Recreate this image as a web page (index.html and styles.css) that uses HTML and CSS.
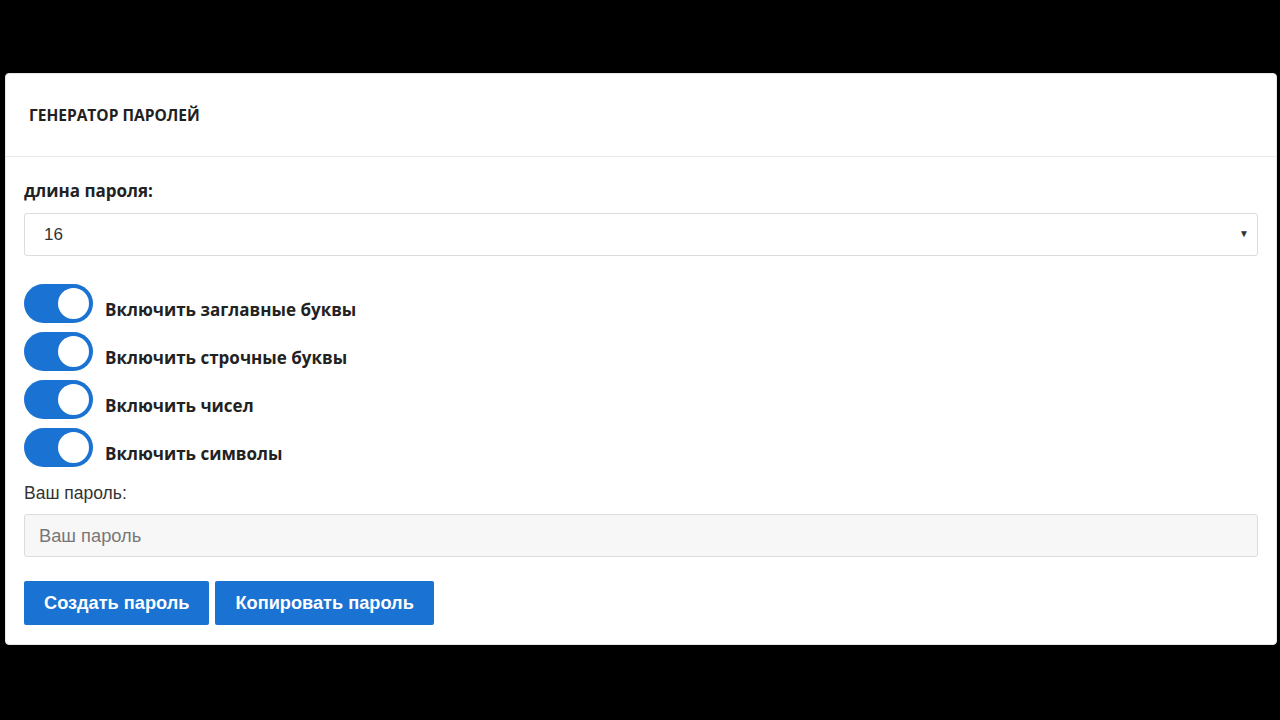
FILE: index.html
```html
<!DOCTYPE html>
<html lang="ru">
<head>
    <meta charset="UTF-8">
    <meta name="viewport" content="width=device-width, initial-scale=1.0">
    <title>Генератор паролей</title>
    <link rel="stylesheet" href="styles.css">
</head>
<body>
    <div class="card">
        <div class="cardHeader">ГЕНЕРАТОР ПАРОЛЕЙ</div>
        <div class="cardBody">
            <label class="boldLabel" for="length">длина пароля:</label>
            <div class="selectBox">
                <select id="length">
                    <option>16</option>
                </select>
                <span class="arrow">&#9660;</span>
            </div>

            <div class="toggles">
                <label class="toggleRow">
                    <span class="toggle"><span class="knob"></span></span>
                    <span class="toggleText">Включить заглавные буквы</span>
                </label>
                <label class="toggleRow">
                    <span class="toggle"><span class="knob"></span></span>
                    <span class="toggleText">Включить строчные буквы</span>
                </label>
                <label class="toggleRow">
                    <span class="toggle"><span class="knob"></span></span>
                    <span class="toggleText">Включить чисел</span>
                </label>
                <label class="toggleRow">
                    <span class="toggle"><span class="knob"></span></span>
                    <span class="toggleText">Включить символы</span>
                </label>
            </div>

            <label class="plainLabel" for="result">Ваш пароль:</label>
            <input type="text" id="result" placeholder="Ваш пароль" readonly>

            <div class="buttons">
                <button class="btn">Создать пароль</button>
                <button class="btn">Копировать пароль</button>
            </div>
        </div>
    </div>
</body>
</html>
```

FILE: styles.css
```css
body{
    margin: 0;
    background-color: #000;
    padding: 73px 3px 0 5px;
    height: 720px;
    box-sizing: border-box;
    font-family: "Liberation Sans", Arial, sans-serif;
    color: #333;
}

.card{
    background-color: #fff;
    border-radius: 4px;
    height: 572px;
    box-sizing: border-box;
    border: 1px solid #e6e6e6;
}

.cardHeader{
    height: 83px;
    box-sizing: border-box;
    border-bottom: 1px solid #e9e9e9;
    padding: 0 0 1px 23px;
    display: flex;
    align-items: center;
    font-family: "Open Sans", sans-serif;
    font-weight: 700;
    font-size: 15.5px;
    color: #212121;
}

.cardBody{
    padding: 22px 18px 0 18px;
}

.boldLabel{
    display: block;
    font-family: "Open Sans", sans-serif;
    font-weight: 700;
    font-size: 17px;
    line-height: 24px;
    color: #222;
    margin-bottom: 10px;
}

.selectBox{
    position: relative;
    height: 43px;
}

.selectBox select{
    appearance: none;
    -webkit-appearance: none;
    width: 100%;
    height: 43px;
    border: 1px solid #dcdcdc;
    border-radius: 3px;
    background-color: #fff;
    padding: 0 19px;
    font-family: "Liberation Sans", Arial, sans-serif;
    font-size: 17px;
    color: #333;
}

.arrow{
    position: absolute;
    right: 9px;
    top: 15px;
    font-size: 10px;
    color: #333;
}

.toggles{
    margin-top: 28px;
    display: flex;
    flex-direction: column;
    gap: 9px;
}

.toggleRow{
    display: flex;
    align-items: center;
    gap: 12px;
    height: 39px;
}

.toggle{
    width: 69px;
    height: 39px;
    border-radius: 20px;
    background-color: #1a73d3;
    display: flex;
    align-items: center;
    justify-content: flex-end;
    padding-right: 4px;
    box-sizing: border-box;
}

.knob{
    width: 31px;
    height: 31px;
    border-radius: 50%;
    background-color: #fff;
}

.toggleText{
    font-family: "Open Sans", sans-serif;
    font-weight: 700;
    font-size: 17px;
    color: #222;
    padding-top: 11px;
}

.plainLabel{
    display: block;
    margin-top: 14px;
    font-size: 17.5px;
    line-height: 24px;
    color: #333;
}

#result{
    display: block;
    margin-top: 9px;
    width: 100%;
    height: 43px;
    box-sizing: border-box;
    border: 1px solid #dcdcdc;
    border-radius: 3px;
    background-color: #f7f7f7;
    padding: 0 14px;
    font-family: "Liberation Sans", Arial, sans-serif;
    font-size: 18.3px;
}

#result::placeholder{
    color: #777;
}

.buttons{
    margin-top: 24px;
    display: flex;
    gap: 6px;
}

.btn{
    background-color: #1a73d3;
    border: none;
    border-radius: 2px;
    height: 44px;
    padding: 0 20px;
    color: #fff;
    font-family: "Liberation Sans", Arial, sans-serif;
    font-weight: bold;
    font-size: 18.2px;
}
```
